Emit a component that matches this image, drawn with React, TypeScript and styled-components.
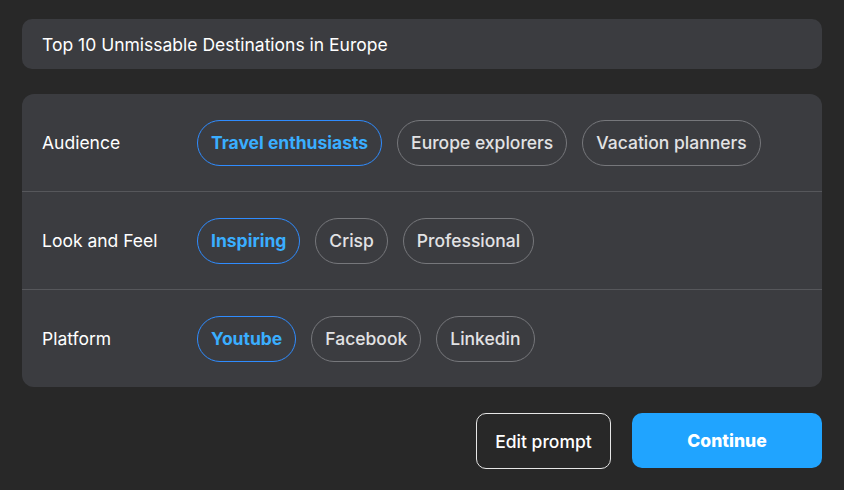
import React, { useState } from "react";
import styled, { createGlobalStyle } from "styled-components";

const Global = createGlobalStyle`
  html, body { margin: 0; padding: 0; background: #282828; }
  body { font-family: Inter, "Noto Sans", sans-serif; -webkit-font-smoothing: antialiased; }
  * { box-sizing: border-box; }
`;

const Page = styled.div`
  width: 844px;
  height: 490px;
  padding: 19px 22px 0 22px;
  display: flex;
  flex-direction: column;
`;

const TitleBox = styled.div`
  height: 50px;
  background: #3b3c40;
  border-radius: 10px;
  display: flex;
  align-items: center;
  padding: 0 20px;
  color: #ffffff;
  font-size: 17.5px;
`;

const Panel = styled.div`
  margin-top: 25px;
  background: #3b3c40;
  border-radius: 12px;
  display: flex;
  flex-direction: column;
`;

const Row = styled.div`
  height: 97px;
  display: flex;
  align-items: center;
  padding: 0 20px;
  & + & { border-top: 1px solid #56575b; height: 98px; }
`;

const Label = styled.div`
  width: 155px;
  color: #ffffff;
  font-size: 17.5px;
`;

const Chips = styled.div`
  display: flex;
  gap: 15px;
`;

const Chip = styled.button<{ $active: boolean }>`
  height: 46px;
  padding: 0 13px;
  border-radius: 23px;
  background: transparent;
  border: 1px solid ${(p) => (p.$active ? "#2f8cff" : "#76777b")};
  color: ${(p) => (p.$active ? "#3aaeff" : "#e2e2e4")};
  font-family: Inter, "Noto Sans", sans-serif;
  font-size: 17.5px;
  font-weight: ${(p) => (p.$active ? 700 : 500)};
  cursor: pointer;
`;

const Footer = styled.div`
  margin-top: 26px;
  display: flex;
  justify-content: flex-end;
  gap: 21px;
`;

const Outline = styled.button`
  height: 56px;
  width: 135px;
  border-radius: 10px;
  border: 1px solid #e6e6e6;
  background: transparent;
  color: #ffffff;
  font-family: Inter, "Noto Sans", sans-serif;
  font-size: 17.5px;
  font-weight: 500;
`;

const Primary = styled.button`
  height: 55px;
  width: 190px;
  border-radius: 10px;
  border: none;
  background: #20a4ff;
  color: #ffffff;
  font-family: Inter, "Noto Sans", sans-serif;
  font-size: 17.5px;
  font-weight: 800;
`;

const groups = [
  { label: "Audience", options: ["Travel enthusiasts", "Europe explorers", "Vacation planners"] },
  { label: "Look and Feel", options: ["Inspiring", "Crisp", "Professional"] },
  { label: "Platform", options: ["Youtube", "Facebook", "Linkedin"] },
];

export default function App() {
  const [sel, setSel] = useState<number[]>([0, 0, 0]);
  return (
    <>
      <Global />
      <Page>
        <TitleBox>Top 10 Unmissable Destinations in Europe</TitleBox>
        <Panel>
          {groups.map((g, gi) => (
            <Row key={g.label}>
              <Label>{g.label}</Label>
              <Chips>
                {g.options.map((o, oi) => (
                  <Chip
                    key={o}
                    $active={sel[gi] === oi}
                    onClick={() => setSel(sel.map((s, i) => (i === gi ? oi : s)))}
                  >
                    {o}
                  </Chip>
                ))}
              </Chips>
            </Row>
          ))}
        </Panel>
        <Footer>
          <Outline>Edit prompt</Outline>
          <Primary>Continue</Primary>
        </Footer>
      </Page>
    </>
  );
}
